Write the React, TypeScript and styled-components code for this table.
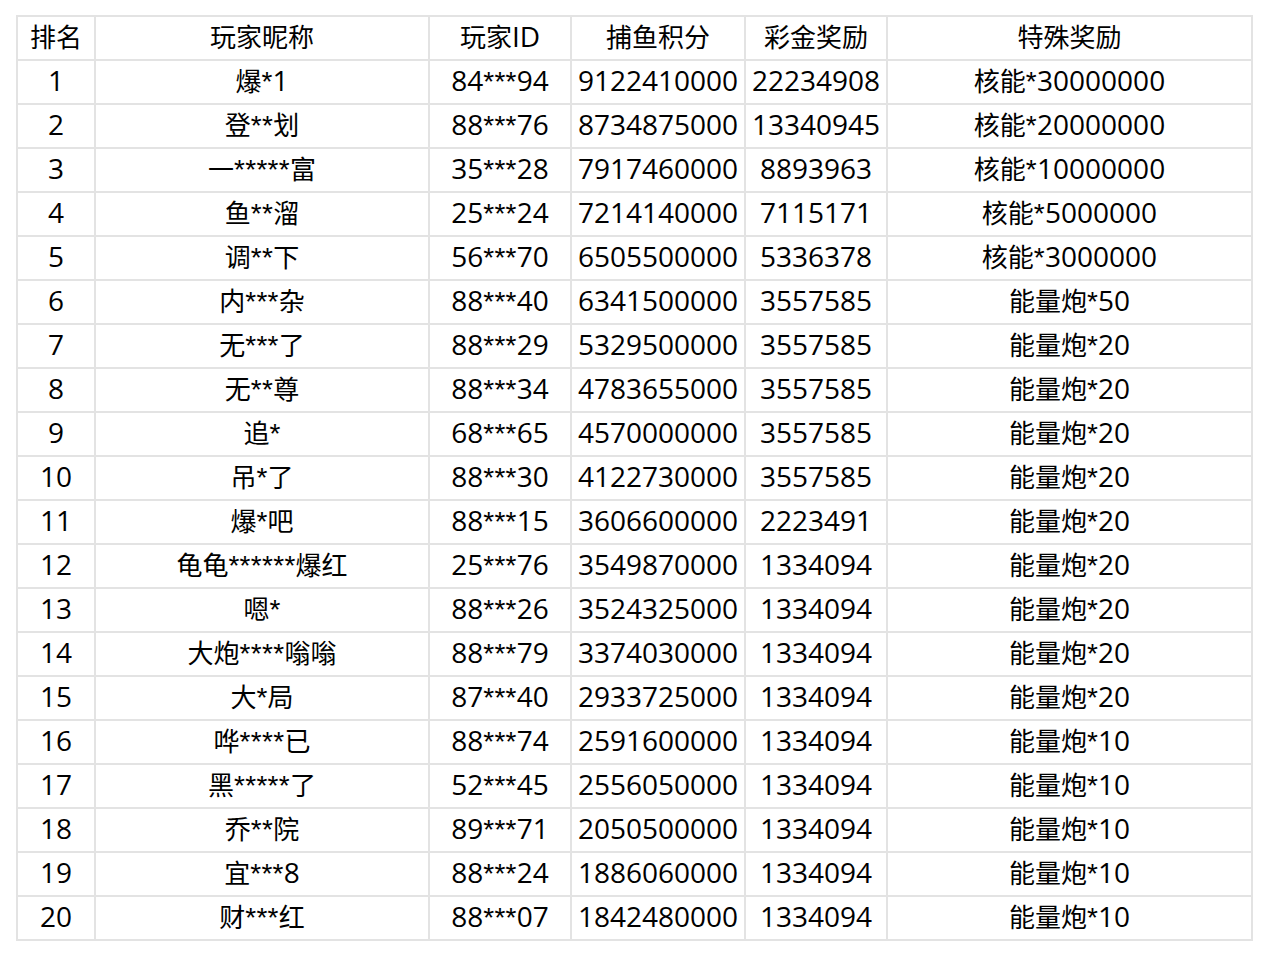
import React from "react";
import styled, { createGlobalStyle } from "styled-components";

const Global = createGlobalStyle`
  html, body { margin: 0; padding: 0; background: #fff; }
  body { font-family: "Open Sans", "Noto Sans CJK SC", sans-serif; }
`;

const Page = styled.div`
  padding: 15px 16px;
`;

const Grid = styled.div`
  display: grid;
  grid-template-columns: 76px 332px 140px 172px 140px 363px;
  grid-auto-rows: 42px;
  gap: 2px;
  padding: 2px;
  background: #e3e3e3;
  width: max-content;
`;

const Cell = styled.div`
  background: #fff;
  text-align: center;
  font-size: 28px;
  line-height: 38px;
  color: #000;
  white-space: nowrap;
`;

const Han = styled.span`
  font-family: "Noto Sans CJK SC", sans-serif;
  font-size: 26px;
`;

const Star = styled.span`
  font-family: "Liberation Sans", sans-serif;
  font-size: 28px;
  letter-spacing: 0.3px;
`;

const header = ["排名", "玩家昵称", "玩家ID", "捕鱼积分", "彩金奖励", "特殊奖励"];

const rows: string[][] = [
  ["1", "爆*1", "84***94", "9122410000", "22234908", "核能*30000000"],
  ["2", "登**划", "88***76", "8734875000", "13340945", "核能*20000000"],
  ["3", "一*****富", "35***28", "7917460000", "8893963", "核能*10000000"],
  ["4", "鱼**溜", "25***24", "7214140000", "7115171", "核能*5000000"],
  ["5", "调**下", "56***70", "6505500000", "5336378", "核能*3000000"],
  ["6", "内***杂", "88***40", "6341500000", "3557585", "能量炮*50"],
  ["7", "无***了", "88***29", "5329500000", "3557585", "能量炮*20"],
  ["8", "无**尊", "88***34", "4783655000", "3557585", "能量炮*20"],
  ["9", "追*", "68***65", "4570000000", "3557585", "能量炮*20"],
  ["10", "吊*了", "88***30", "4122730000", "3557585", "能量炮*20"],
  ["11", "爆*吧", "88***15", "3606600000", "2223491", "能量炮*20"],
  ["12", "龟龟******爆红", "25***76", "3549870000", "1334094", "能量炮*20"],
  ["13", "嗯*", "88***26", "3524325000", "1334094", "能量炮*20"],
  ["14", "大炮****嗡嗡", "88***79", "3374030000", "1334094", "能量炮*20"],
  ["15", "大*局", "87***40", "2933725000", "1334094", "能量炮*20"],
  ["16", "哗****已", "88***74", "2591600000", "1334094", "能量炮*10"],
  ["17", "黑*****了", "52***45", "2556050000", "1334094", "能量炮*10"],
  ["18", "乔**院", "89***71", "2050500000", "1334094", "能量炮*10"],
  ["19", "宜***8", "88***24", "1886060000", "1334094", "能量炮*10"],
  ["20", "财***红", "88***07", "1842480000", "1334094", "能量炮*10"],
];

const splitter = /([\u4e00-\u9fff\u2014]+|\*+)/;

function Text({ value }: { value: string }) {
  const parts = value.split(splitter).filter(Boolean);
  return (
    <>
      {parts.map((p, i) => {
        if (/[\u4e00-\u9fff\u2014]/.test(p)) return <Han key={i}>{p}</Han>;
        if (/^\*+$/.test(p)) return <Star key={i}>{p}</Star>;
        return <span key={i}>{p}</span>;
      })}
    </>
  );
}

export default function App() {
  return (
    <Page>
      <Global />
      <Grid>
        {header.map((h) => (
          <Cell key={h}>
            <Text value={h} />
          </Cell>
        ))}
        {rows.map((r) =>
          r.map((c, i) => (
            <Cell key={r[0] + "-" + i}>
              <Text value={c} />
            </Cell>
          ))
        )}
      </Grid>
    </Page>
  );
}
